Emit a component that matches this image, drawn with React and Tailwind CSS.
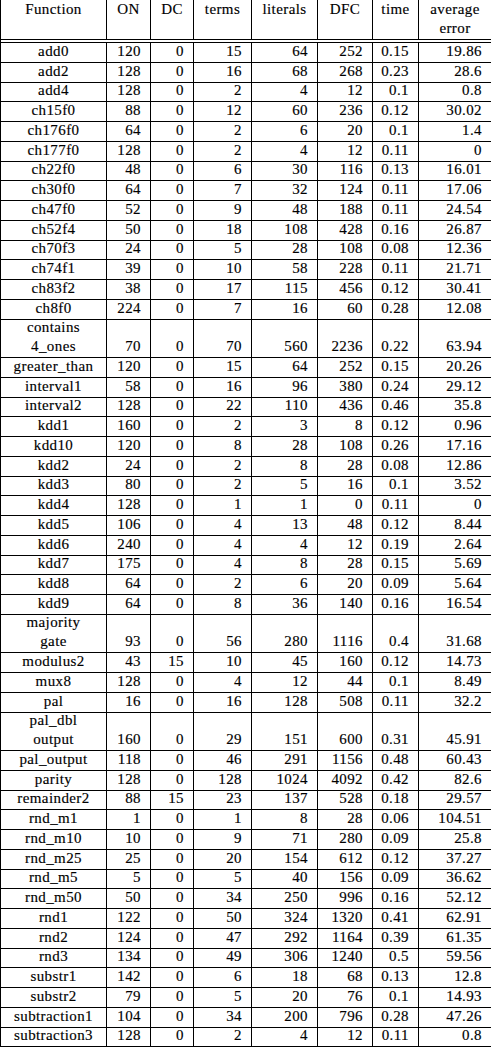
import React from 'react';

// widths of the eight columns, in px (left rule at x=0, right rule at x=490)
const cols = ['w-[106px]', 'w-[44px]', 'w-[43px]', 'w-[58px]', 'w-[66px]', 'w-[55px]', 'w-[46px]', 'w-[73px]'];

const header = ['Function', 'ON', 'DC', 'terms', 'literals', 'DFC', 'time', ['average', 'error']];

const rows = [
    ['add0', 120, 0, 15, 64, 252, 0.15, 19.86],
    ['add2', 128, 0, 16, 68, 268, 0.23, 28.6],
    ['add4', 128, 0, 2, 4, 12, 0.1, 0.8],
    ['ch15f0', 88, 0, 12, 60, 236, 0.12, 30.02],
    ['ch176f0', 64, 0, 2, 6, 20, 0.1, 1.4],
    ['ch177f0', 128, 0, 2, 4, 12, 0.11, 0],
    ['ch22f0', 48, 0, 6, 30, 116, 0.13, 16.01],
    ['ch30f0', 64, 0, 7, 32, 124, 0.11, 17.06],
    ['ch47f0', 52, 0, 9, 48, 188, 0.11, 24.54],
    ['ch52f4', 50, 0, 18, 108, 428, 0.16, 26.87],
    ['ch70f3', 24, 0, 5, 28, 108, 0.08, 12.36],
    ['ch74f1', 39, 0, 10, 58, 228, 0.11, 21.71],
    ['ch83f2', 38, 0, 17, 115, 456, 0.12, 30.41],
    ['ch8f0', 224, 0, 7, 16, 60, 0.28, 12.08],
    [['contains', '4_ones'], 70, 0, 70, 560, 2236, 0.22, 63.94],
    ['greater_than', 120, 0, 15, 64, 252, 0.15, 20.26],
    ['interval1', 58, 0, 16, 96, 380, 0.24, 29.12],
    ['interval2', 128, 0, 22, 110, 436, 0.46, 35.8],
    ['kdd1', 160, 0, 2, 3, 8, 0.12, 0.96],
    ['kdd10', 120, 0, 8, 28, 108, 0.26, 17.16],
    ['kdd2', 24, 0, 2, 8, 28, 0.08, 12.86],
    ['kdd3', 80, 0, 2, 5, 16, 0.1, 3.52],
    ['kdd4', 128, 0, 1, 1, 0, 0.11, 0],
    ['kdd5', 106, 0, 4, 13, 48, 0.12, 8.44],
    ['kdd6', 240, 0, 4, 4, 12, 0.19, 2.64],
    ['kdd7', 175, 0, 4, 8, 28, 0.15, 5.69],
    ['kdd8', 64, 0, 2, 6, 20, 0.09, 5.64],
    ['kdd9', 64, 0, 8, 36, 140, 0.16, 16.54],
    [['majority', 'gate'], 93, 0, 56, 280, 1116, 0.4, 31.68],
    ['modulus2', 43, 15, 10, 45, 160, 0.12, 14.73],
    ['mux8', 128, 0, 4, 12, 44, 0.1, 8.49],
    ['pal', 16, 0, 16, 128, 508, 0.11, 32.2],
    [['pal_dbl', 'output'], 160, 0, 29, 151, 600, 0.31, 45.91],
    ['pal_output', 118, 0, 46, 291, 1156, 0.48, 60.43],
    ['parity', 128, 0, 128, 1024, 4092, 0.42, 82.6],
    ['remainder2', 88, 15, 23, 137, 528, 0.18, 29.57],
    ['rnd_m1', 1, 0, 1, 8, 28, 0.06, 104.51],
    ['rnd_m10', 10, 0, 9, 71, 280, 0.09, 25.8],
    ['rnd_m25', 25, 0, 20, 154, 612, 0.12, 37.27],
    ['rnd_m5', 5, 0, 5, 40, 156, 0.09, 36.62],
    ['rnd_m50', 50, 0, 34, 250, 996, 0.16, 52.12],
    ['rnd1', 122, 0, 50, 324, 1320, 0.41, 62.91],
    ['rnd2', 124, 0, 47, 292, 1164, 0.39, 61.35],
    ['rnd3', 134, 0, 49, 306, 1240, 0.5, 59.56],
    ['substr1', 142, 0, 6, 18, 68, 0.13, 12.8],
    ['substr2', 79, 0, 5, 20, 76, 0.1, 14.93],
    ['subtraction1', 104, 0, 34, 200, 796, 0.28, 47.26],
    ['subtraction3', 128, 0, 2, 4, 12, 0.11, 0.8],
];

const Row = ({ cells }) => {
    const tall = Array.isArray(cells[0]);
    return (
        <div className={`flex border-b border-black ${tall ? 'h-[38.5px]' : 'h-[19.75px]'}`}>
            {cells.map((c, i) => (
                <div
                    key={i}
                    className={`${cols[i]} shrink-0 border-r border-black flex flex-col justify-end pb-[1px] ${
                        i === 0 ? 'items-center' : 'items-end pr-[9px]'
                    }`}
                >
                    {Array.isArray(c) ? c.map(t => <span key={t}>{t}</span>) : <span>{c}</span>}
                </div>
            ))}
        </div>
    );
};

export default function App() {
    return (
        <div className="w-[491px] bg-white text-black font-serif">
            <div className="border-l border-black w-[491px] text-[15px] leading-[19px] tracking-[0.4px] [font-family:Liberation_Serif,serif] [-webkit-text-stroke:0.15px_black]">
                <div className="flex h-[40px] border-b border-black">
                    {header.map((h, i) => (
                        <div key={i} className={`${cols[i]} shrink-0 border-r border-black flex flex-col items-center`}>
                            {Array.isArray(h) ? h.map(t => <span key={t}>{t}</span>) : <span>{h}</span>}
                        </div>
                    ))}
                </div>
                <div className="h-[3px] border-b border-black" />
                {rows.map((r, i) => (
                    <Row key={i} cells={r} />
                ))}
            </div>
        </div>
    );
}
